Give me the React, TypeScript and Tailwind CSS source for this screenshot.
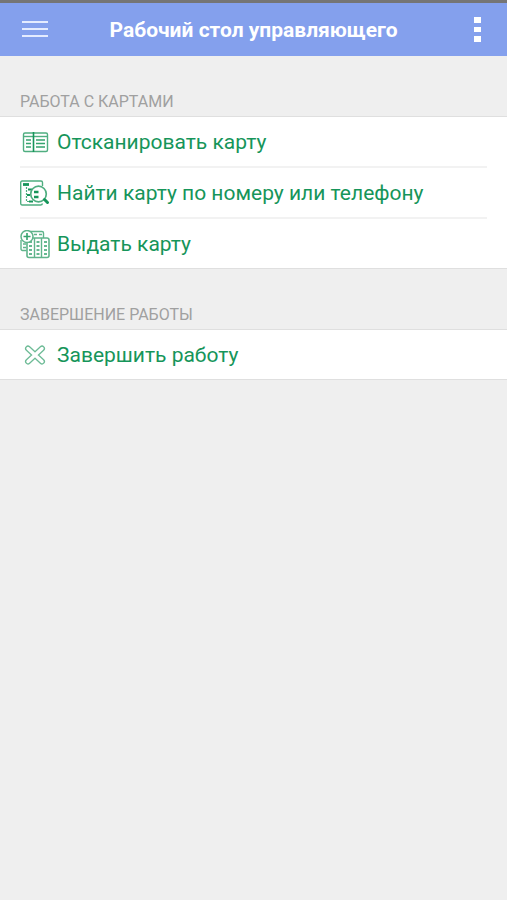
import type { ReactNode } from "react";

const ScanIcon = () => (
    <svg viewBox="0 0 30 30" className="size-[30px] shrink-0" fill="none" stroke="#4fae80" aria-hidden="true">
        <rect x="3.5" y="5" width="24" height="18.5" rx="1.5" strokeWidth="1.4" />
        <path d="M3.5 8.500h24" strokeWidth="1.4" />
        <path d="M13.5 4v20" stroke="#16955a" strokeWidth="1.6" />
        <path d="M6 12h5M6 15.5h5M6 19h5M16 12h9M16 15.5h9M16 19h9" stroke="#35a36e" strokeWidth="1.5" />
    </svg>
);

const SearchIcon = () => (
    <svg viewBox="0 0 30 30" className="size-[30px] shrink-0" fill="none" stroke="#4fae80" aria-hidden="true">
        <path d="M22.5 7V3.500A1.5 1.5 0 0 0 21 2H2A1.5 1.5 0 0 0 .7 3.500v21A1.5 1.5 0 0 0 2 26h18.500a2 2 0 0 0 2-1.500" strokeWidth="1.4" />
        <path d="M3 5.500h6" stroke="#16955a" strokeWidth="2.8" />
        <path d="M6.500 8v14.500h5" strokeWidth="1.2" strokeDasharray="2 1" />
        <path d="M8 10.500h4M7 16h3M9 22.500h4" stroke="#16955a" strokeWidth="1.8" />
        <circle cx="18.5" cy="15" r="7.8" fill="#fff" strokeWidth="1.7" />
        <path d="M14 13h4.500M14 18h4.500" stroke="#16955a" strokeWidth="2.4" />
        <path d="m24.500 20.500 3 3" stroke="#16955a" strokeWidth="3" strokeLinecap="round" />
    </svg>
);

const IssueIcon = () => (
    <svg viewBox="0 0 30 30" className="size-[30px] shrink-0" fill="none" stroke="#5fb48b" aria-hidden="true">
        <path d="M10 1.500h12A1.5 1.5 0 0 1 23.5 3v5M6.500 20.500h-4A1.5 1.5 0 0 1 1 19V10" strokeWidth="1.4" />
        <path d="M14 4.500h3M19 4.500h3M3 14h3M3 17.500h3" strokeWidth="1.6" />
        <rect x="7" y="8" width="22" height="19.5" rx="2" fill="#fff" strokeWidth="1.6" />
        <path d="M14.5 8v19M21.5 8v19" strokeWidth="1.4" />
        <path d="M9 12h3M9 16h3M9 20h3M9 24h3M16.5 12h3M16.5 16h3M16.5 20h3M16.5 24h3M24 12h3M24 16h3M24 20h3M24 24h3" stroke="#35a36e" strokeWidth="1.6" />
        <circle cx="7" cy="6.5" r="6" fill="#fff" strokeWidth="1.5" />
        <path d="M3.5 6.500h7M7 3v7" stroke="#35a36e" strokeWidth="1.6" />
    </svg>
);

const CloseIcon = () => (
    <svg viewBox="0 0 30 30" className="size-[30px] shrink-0" fill="none" strokeLinecap="round" aria-hidden="true">
        <path d="m8 7.500 14 13M22 7.500l-14 13" stroke="#6dbb96" strokeWidth="6" />
        <path d="m8 7.500 14 13M22 7.500l-14 13" stroke="#fff" strokeWidth="3.4" />
    </svg>
);

const Section = ({ title, children }: { title: string; children: ReactNode }) => (
    <section>
        <h2 className="px-5 pt-9 pb-1 text-base leading-5 text-[#a0a0a0]">{title}</h2>
        <ul className="bg-white border-y border-[#dfdfdf]">{children}</ul>
    </section>
);

const Item = ({ icon, label }: { icon: ReactNode; label: string }) => (
    <li className="group px-5">
        <button type="button" className="flex h-[51px] w-full items-center gap-[7px] border-b-2 border-[#f2f2f2] pt-0.5 text-left text-[21px] text-[#16955a] group-last:h-[49px] group-last:border-b-0">
            {icon}
            <span>{label}</span>
        </button>
    </li>
);

export default function App() {
    return (
        <div className="min-h-screen bg-[#efefef] font-['Roboto',sans-serif]">
            <header className="flex h-14 items-center justify-between border-t-3 border-[#757575] bg-[#84a0ed] px-5 pt-0.5">
                <button type="button" aria-label="Меню" className="w-[30px]">
                    <svg viewBox="0 0 30 30" className="size-[30px]" stroke="#e4ebff" strokeWidth="2" aria-hidden="true">
                        <path d="M2 6h26M2 13h26M2 20h26" />
                    </svg>
                </button>
                <h1 className="text-[21px] font-bold text-white">Рабочий стол управляющего</h1>
                <button type="button" aria-label="Ещё" className="flex w-[30px] justify-end">
                    <svg viewBox="0 0 20 30" className="h-[30px] w-5" fill="#fff" aria-hidden="true">
                        <path d="M7 1h7v6H7zM7 11h7v5H7zM7 20h7v6H7z" />
                    </svg>
                </button>
            </header>
            <main>
                <Section title="РАБОТА С КАРТАМИ">
                    <Item icon={<ScanIcon />} label="Отсканировать карту" />
                    <Item icon={<SearchIcon />} label="Найти карту по номеру или телефону" />
                    <Item icon={<IssueIcon />} label="Выдать карту" />
                </Section>
                <Section title="ЗАВЕРШЕНИЕ РАБОТЫ">
                    <Item icon={<CloseIcon />} label="Завершить работу" />
                </Section>
            </main>
        </div>
    );
}
